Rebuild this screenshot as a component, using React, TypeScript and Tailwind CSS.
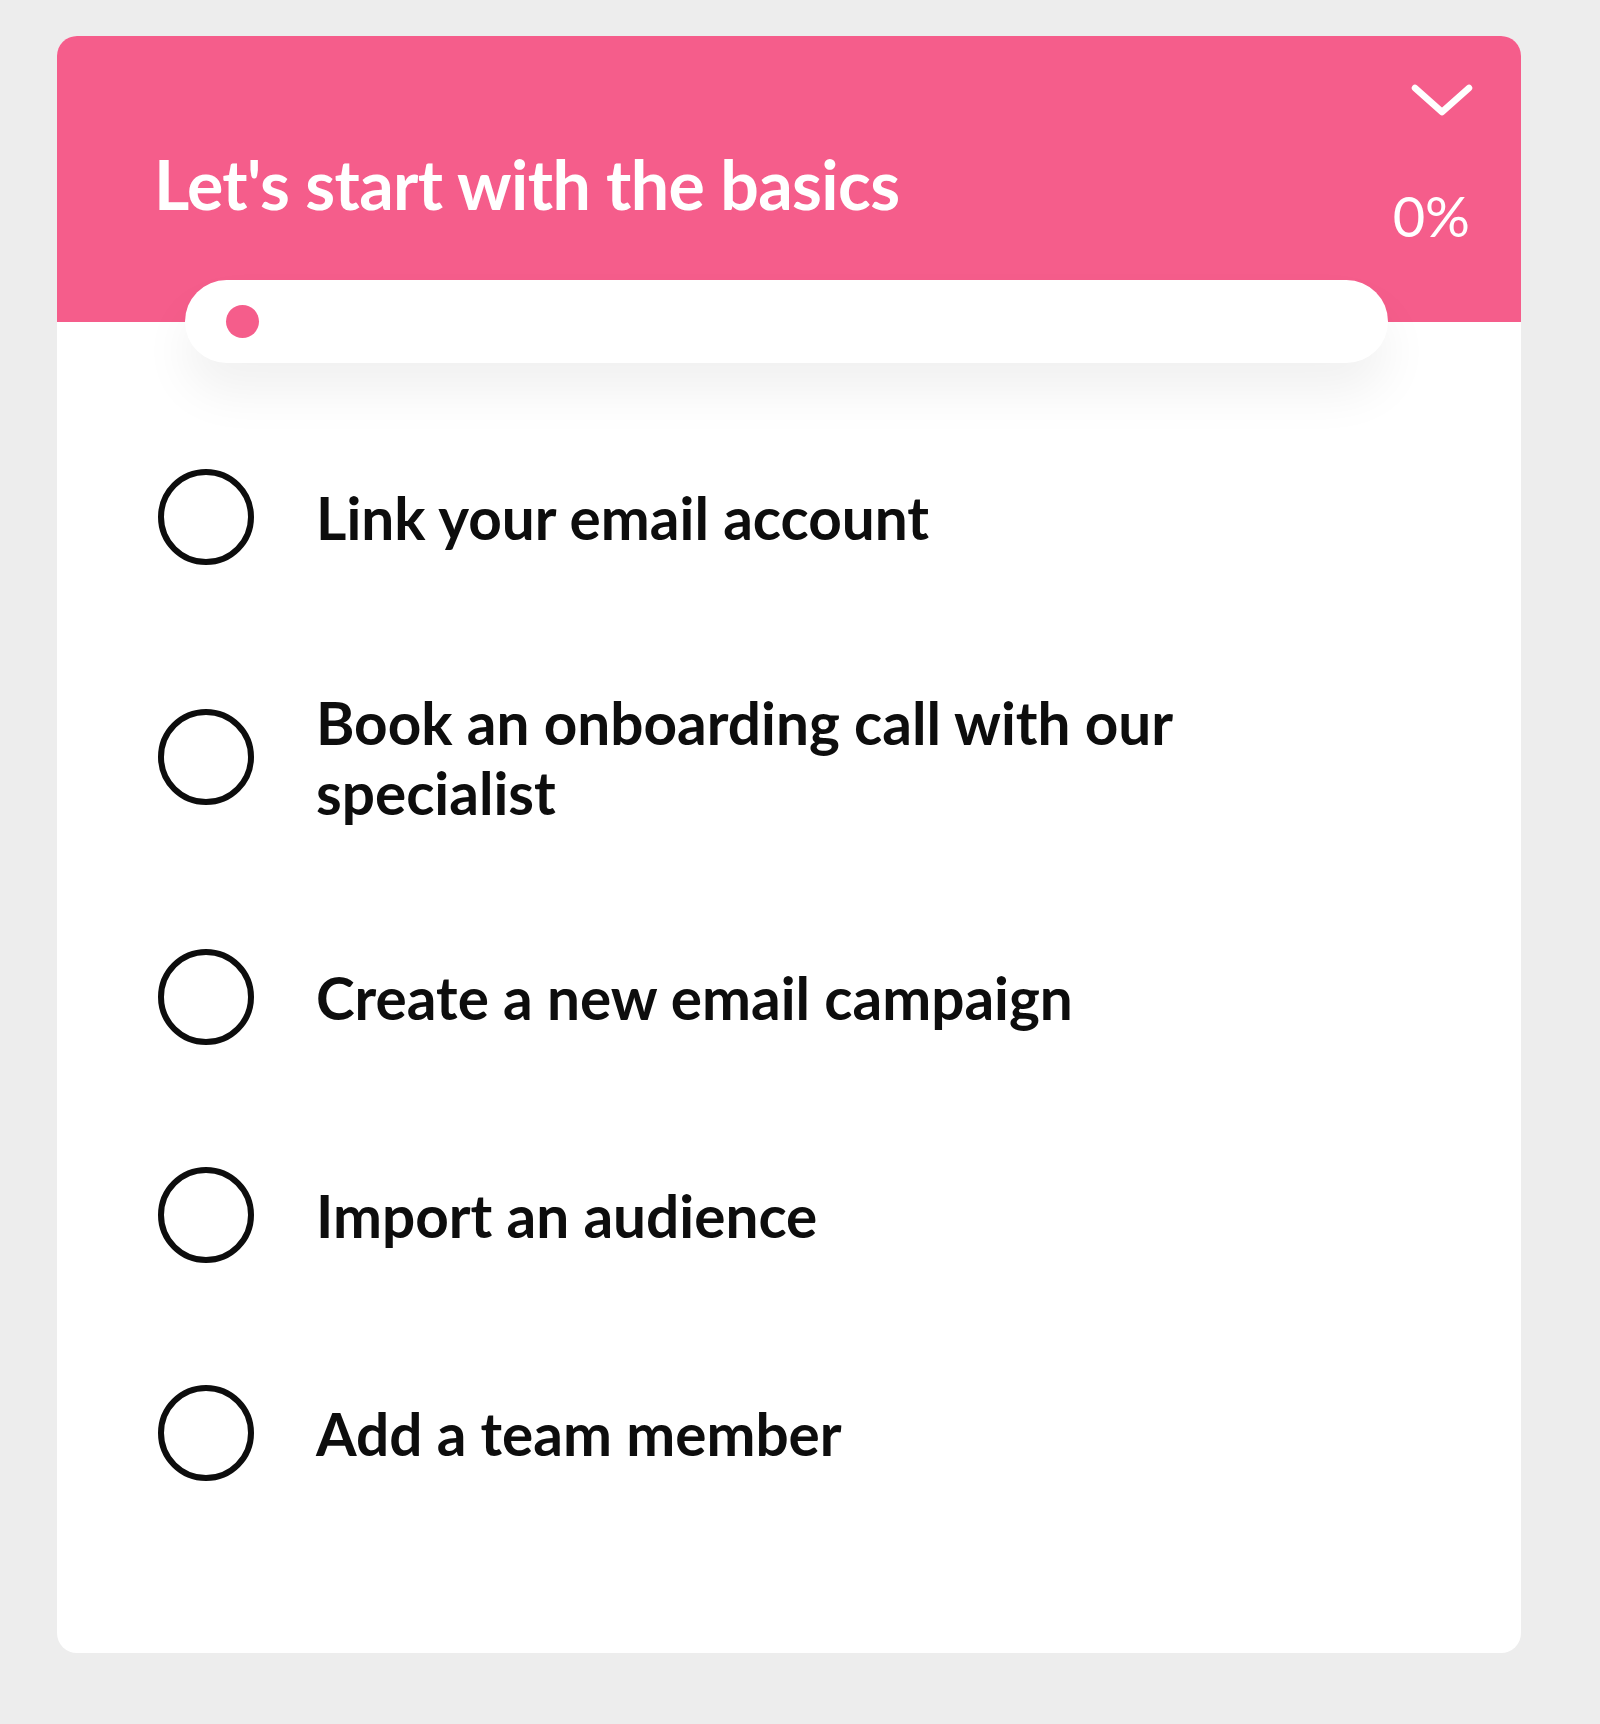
const tasks = [
  'Link your email account',
  'Book an onboarding call with our specialist',
  'Create a new email campaign',
  'Import an audience',
  'Add a team member',
]

function Chevron() {
  return (
    <svg width="64" height="32" viewBox="0 0 64 32" fill="none" aria-hidden="true">
      <path d="M5 4 L32 28 L59 4" stroke="white" strokeWidth="6.5" strokeLinecap="round" strokeLinejoin="round" />
    </svg>
  )
}

function TaskRow({ label }: { label: string }) {
  return (
    <div className="flex items-center">
      <span className="h-[96px] w-[96px] shrink-0 rounded-full border-[6px] border-[#0d0d0d]" />
      <span className="ml-[62px] max-w-[980px] text-[58.5px] font-bold leading-[70px] text-[#0d0d0d]">
        {label}
      </span>
    </div>
  )
}

export default function App() {
  return (
    <div
      className="min-h-[1724px] bg-[#ededed] pl-[57px] pt-[36px]"
      style={{ fontFamily: 'Lato, "Open Sans", sans-serif' }}
    >
      <div className="w-[1464px] overflow-hidden rounded-[20px] bg-white">
        <div className="h-[286px] bg-[#f55d8b] pl-[97px] pr-[47px] pt-[48px]">
          <div className="flex justify-end">
            <Chevron />
          </div>
          <div className="flex items-start justify-between">
            <h2 className="mt-[34px] text-[68px] font-bold leading-none tracking-[-0.6px] text-white">
              Let's start with the basics
            </h2>
            <span className="mr-[4px] mt-[72px] text-[56px] font-normal leading-none text-white">0%</span>
          </div>
        </div>

        <div className="relative z-10 -mt-[42px] ml-[128px] mr-[133px] flex h-[83px] items-center rounded-full bg-white pl-[41px] shadow-[0_30px_50px_rgba(0,0,0,0.06)]">
          <span className="h-[33px] w-[33px] rounded-full bg-[#f55d8b]" />
        </div>

        <div className="flex flex-col gap-[122px] pb-[172px] pl-[101px] pt-[106px]">
          {tasks.map((t) => (
            <TaskRow key={t} label={t} />
          ))}
        </div>
      </div>
    </div>
  )
}
